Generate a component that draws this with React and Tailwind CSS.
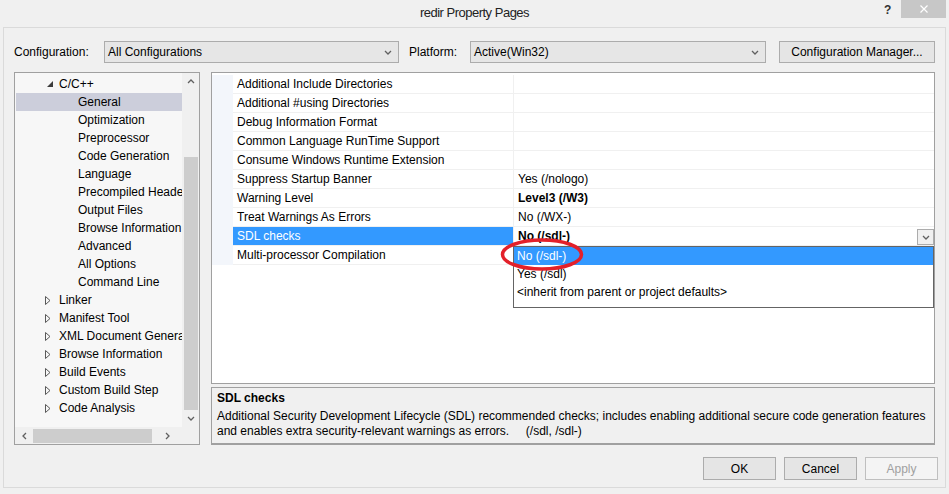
import React from "react";

const treeItems = [
    { label: "C/C++", level: 1, state: "open" },
    { label: "General", level: 2, selected: true },
    { label: "Optimization", level: 2 },
    { label: "Preprocessor", level: 2 },
    { label: "Code Generation", level: 2 },
    { label: "Language", level: 2 },
    { label: "Precompiled Headers", level: 2 },
    { label: "Output Files", level: 2 },
    { label: "Browse Information", level: 2 },
    { label: "Advanced", level: 2 },
    { label: "All Options", level: 2 },
    { label: "Command Line", level: 2 },
    { label: "Linker", level: 1, state: "closed" },
    { label: "Manifest Tool", level: 1, state: "closed" },
    { label: "XML Document Generator", level: 1, state: "closed" },
    { label: "Browse Information", level: 1, state: "closed" },
    { label: "Build Events", level: 1, state: "closed" },
    { label: "Custom Build Step", level: 1, state: "closed" },
    { label: "Code Analysis", level: 1, state: "closed" },
];

const props = [
    { name: "Additional Include Directories", value: "" },
    { name: "Additional #using Directories", value: "" },
    { name: "Debug Information Format", value: "" },
    { name: "Common Language RunTime Support", value: "" },
    { name: "Consume Windows Runtime Extension", value: "" },
    { name: "Suppress Startup Banner", value: "Yes (/nologo)" },
    { name: "Warning Level", value: "Level3 (/W3)", bold: true },
    { name: "Treat Warnings As Errors", value: "No (/WX-)" },
    { name: "SDL checks", value: "No (/sdl-)", bold: true, selected: true },
    { name: "Multi-processor Compilation", value: "" },
];

const Chevron = ({ dir = "down", className = "" }) => {
    const pts = {
        down: "1,1 4,4 7,1",
        up: "1,4 4,1 7,4",
        left: "4,1 1,4 4,7",
        right: "1,1 4,4 1,7",
    }[dir];
    const vertical = dir === "up" || dir === "down";
    return (
        <svg
            width={vertical ? 8 : 5}
            height={vertical ? 5 : 8}
            viewBox={vertical ? "0 0 8 5" : "0 0 5 8"}
            className={className}
        >
            <polyline points={pts} fill="none" stroke="#606060" strokeWidth="1.3" />
        </svg>
    );
};

const Combo = ({ text, width }) => (
    <div
        className={`${width} h-[22px] flex items-center justify-between pl-[3px] pr-[6px] bg-[#e6e6e6] border border-[#acacac]`}
    >
        <span>{text}</span>
        <Chevron dir="down" />
    </div>
);

const Button = ({ children, disabled }) => (
    <div
        className={`w-[73px] h-[23px] flex items-center justify-center border ${
            disabled
                ? "border-[#bfbfbf] bg-[#f4f4f4] text-[#a0a0a0]"
                : "border-[#acacac] bg-[#e5e5e5] text-black"
        }`}
    >
        {children}
    </div>
);

const Tree = () => (
    <div className="w-[186px] h-[373px] border border-[#a0a0a0] bg-[#f7f7f7] flex flex-col">
        <div className="flex flex-1 min-h-0">
            <div className="flex-1 overflow-hidden pt-[2px]">
                {treeItems.map((item, i) => (
                    <div
                        key={i}
                        className={`h-[18px] ml-[1px] flex items-center whitespace-nowrap ${
                            item.selected ? "bg-[#cccedb]" : ""
                        } ${item.level === 1 ? "pl-[29px]" : "pl-[62px]"}`}
                    >
                        {item.level === 1 && (
                            <span className="w-[14px] shrink-0 flex items-center">
                                {item.state === "open" ? (
                                    <svg width="6" height="6" viewBox="0 0 6 6" className="ml-[2px]">
                                        <path d="M6 0 L6 6 L0 6 Z" fill="#3c3c3c" />
                                    </svg>
                                ) : (
                                    <svg width="6" height="9" viewBox="0 0 6 9">
                                        <path d="M0.5 0.5 L5 4.5 L0.5 8.5 Z" fill="none" stroke="#595959" />
                                    </svg>
                                )}
                            </span>
                        )}
                        <span>{item.label}</span>
                    </div>
                ))}
            </div>
            <div className="w-[17px] shrink-0 bg-[#f0f0f0] flex flex-col items-center">
                <div className="h-[17px] flex items-center justify-center">
                    <Chevron dir="up" />
                </div>
                <div className="h-[67px]" />
                <div className="w-[14px] h-[253px] bg-[#cdcdcd]" />
                <div className="flex-1 flex items-center justify-center">
                    <Chevron dir="down" />
                </div>
            </div>
        </div>
        <div className="h-[17px] flex bg-[#f0f0f0]">
            <div className="w-[18px] flex items-center justify-center">
                <Chevron dir="left" />
            </div>
            <div className="w-[119px] h-[14px] mt-[2px] bg-[#cdcdcd]" />
            <div className="flex-1 flex items-center justify-center">
                <Chevron dir="right" />
            </div>
            <div className="w-[17px] bg-[#f0f0f0]" />
        </div>
    </div>
);

const Grid = () => (
    <div className="relative w-[724px] h-[312px] border border-[#a0a0a0] bg-white pt-[2px]">
        {props.map((p, i) => (
            <div key={i} className="flex h-[19px]">
                <div className="w-[21px] bg-[#f3f6fb]" />
                <div
                    className={`w-[281px] pl-[4px] flex items-center border-b border-r border-[#f0f0f0] whitespace-nowrap ${
                        p.selected ? "bg-[#3399ff] text-white" : ""
                    }`}
                >
                    {p.name}
                </div>
                <div
                    className={`flex-1 pl-[4px] flex items-center justify-between border-b border-[#f0f0f0] ${
                        p.bold ? "font-bold" : ""
                    }`}
                >
                    <span>{p.value}</span>
                    {p.selected && (
                        <div className="w-[17px] h-[16px] mt-[2px] flex items-center justify-center bg-[#f0f0f0] border border-[#acacac]">
                            <Chevron dir="down" />
                        </div>
                    )}
                </div>
            </div>
        ))}
        <div className="absolute left-[301px] top-[173px] w-[421px] h-[62px] bg-white border border-[#646464]">
            <div className="h-[18px] pl-[3px] flex items-center bg-[#3399ff] text-white">No (/sdl-)</div>
            <div className="h-[18px] pl-[3px] flex items-center">Yes (/sdl)</div>
            <div className="h-[18px] pl-[3px] flex items-center">&lt;inherit from parent or project defaults&gt;</div>
        </div>
    </div>
);

const Description = () => (
    <div className="w-[724px] h-[58px] border border-b-2 border-[#a0a0a0] bg-[#f0f0f0] pl-[5px] pt-[2px]">
        <div className="font-bold leading-[16px]">SDL checks</div>
        <div className="mt-[3px] leading-[15px] whitespace-pre">
            {"Additional Security Development Lifecycle (SDL) recommended checks; includes enabling additional secure code generation features\nand enables extra security-relevant warnings as errors.     (/sdl, /sdl-)"}
        </div>
    </div>
);

export default function App() {
    return (
        <div className="relative w-[949px] h-[494px] overflow-hidden bg-[#f0f0f0] text-black text-[12px] font-['Liberation_Sans',Arial,sans-serif]">
            <div className="relative h-[27px] flex items-center justify-center">
                <span className="text-[13px] tracking-[-0.5px] text-[#222] mt-[-1px]">redir Property Pages</span>
                <span className="absolute left-[884px] top-[1px] font-bold text-[12px] text-[#333]">?</span>
                <div className="absolute left-[901px] top-0 w-[45px] h-[18px] bg-[#c7c7c7] flex items-center justify-center">
                    <svg width="8" height="8" viewBox="0 0 8 8">
                        <path d="M0.5 0.5 L7.5 7.5 M7.5 0.5 L0.5 7.5" stroke="white" strokeWidth="1.2" />
                    </svg>
                </div>
            </div>

            <div className="ml-[3px] w-[943px] h-[461px] border border-[#dadada] pl-[10px] pt-[13px]">
                <div className="flex items-center h-[22px]">
                    <span className="w-[90px]">Configuration:</span>
                    <Combo text="All Configurations" width="w-[295px]" />
                    <span className="ml-[10px] w-[61px]">Platform:</span>
                    <Combo text="Active(Win32)" width="w-[296px]" />
                    <div className="ml-[13px] w-[156px] h-[22px] flex items-center justify-center bg-[#e5e5e5] border border-[#acacac]">
                        Configuration Manager...
                    </div>
                </div>

                <div className="flex mt-[9px]">
                    <Tree />
                    <div className="ml-[11px] flex flex-col gap-[3px]">
                        <Grid />
                        <Description />
                    </div>
                </div>

                <div className="flex justify-end gap-[8px] mt-[12px] pr-[7px]">
                    <Button>OK</Button>
                    <Button>Cancel</Button>
                    <Button disabled>Apply</Button>
                </div>
            </div>

            <svg
                className="absolute left-[500px] top-[238px]"
                width="84"
                height="33"
                viewBox="0 0 84 33"
            >
                <ellipse cx="42" cy="16.5" rx="39.5" ry="14.5" fill="none" stroke="#e3202a" strokeWidth="3.5" />
            </svg>
        </div>
    );
}
